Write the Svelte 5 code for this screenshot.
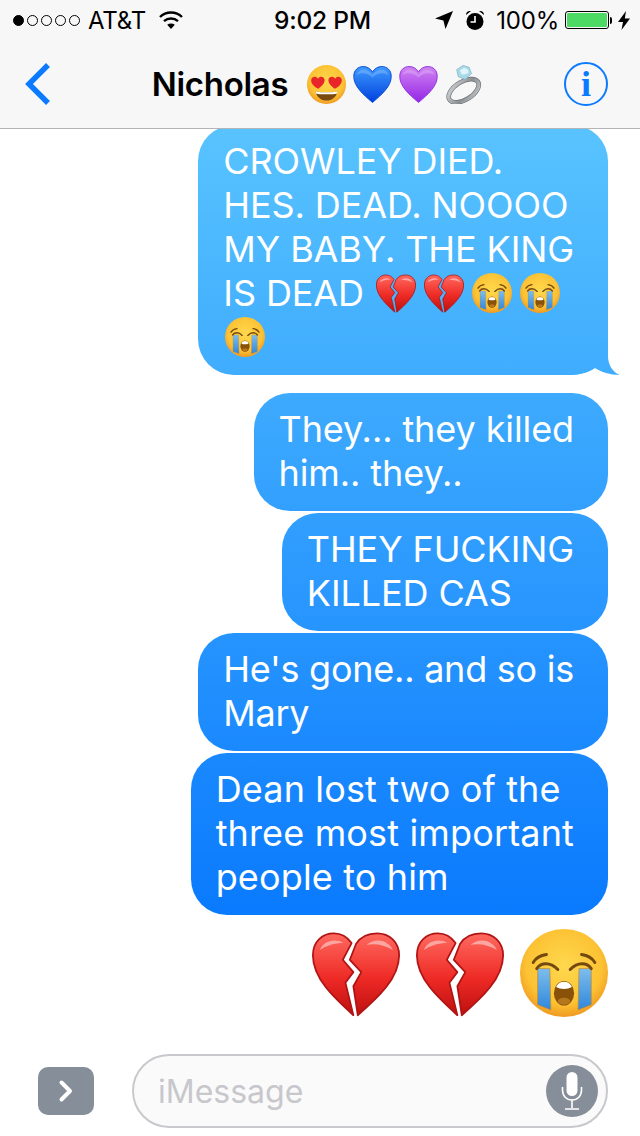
<script>
	const bubbles = [
		{ lines: ['They... they killed', 'him.. they..'], fit: '' },
		{ lines: ['THEY FUCKING', 'KILLED CAS'], fit: '' },
		{ lines: ["He's gone.. and so is", 'Mary'], fit: 'tight' },
		{ lines: ['Dean lost two of the', 'three most important', 'people to him'], fit: 'loose' }
	];
</script>

{#snippet emoji(name, cls)}
	<svg class={cls} viewBox="0 0 100 100" aria-hidden="true"><use href="#{name}" /></svg>
{/snippet}

<svg class="defs" aria-hidden="true">
	<defs>
		<linearGradient id="g-red" x1="0" y1="0" x2="0" y2="1">
			<stop offset="0" stop-color="#ff6a60" />
			<stop offset="0.55" stop-color="#ee2a25" />
			<stop offset="1" stop-color="#bd1010" />
		</linearGradient>
		<linearGradient id="g-blue" x1="0" y1="0" x2="0" y2="1">
			<stop offset="0" stop-color="#3f9bff" />
			<stop offset="1" stop-color="#0040dd" />
		</linearGradient>
		<linearGradient id="g-purple" x1="0" y1="0" x2="0" y2="1">
			<stop offset="0" stop-color="#d184f2" />
			<stop offset="1" stop-color="#9526e6" />
		</linearGradient>
		<radialGradient id="g-face" cx="0.5" cy="0.42" r="0.6">
			<stop offset="0" stop-color="#ffd84e" />
			<stop offset="0.72" stop-color="#fcc233" />
			<stop offset="1" stop-color="#ee9520" />
		</radialGradient>
		<linearGradient id="g-tear" x1="0" y1="0" x2="0" y2="1">
			<stop offset="0" stop-color="#7dbdec" />
			<stop offset="1" stop-color="#2f87dc" />
		</linearGradient>
		<linearGradient id="g-silver" x1="0" y1="0" x2="1" y2="1">
			<stop offset="0" stop-color="#d5d8da" />
			<stop offset="0.55" stop-color="#8b8e91" />
			<stop offset="1" stop-color="#c6c9cb" />
		</linearGradient>
		<clipPath id="face-clip"><circle cx="50" cy="50" r="50" /></clipPath>

		<symbol id="broken" viewBox="0 0 100 100">
			<g transform="translate(0 2)">
				<path d="M47 96 C25 76 1 54 1 28 C1 12 12 3 25 3 C33 3 40 7 45 14 L35 33 L47 47 L38 59 Z" fill="url(#g-red)" stroke="#b01414" stroke-width="2" stroke-linejoin="round" />
				<path d="M52 96 L47 63 L56 47 L43 33 L50 15 C55 7 63 3 74 3 C88 3 99 13 99 28 C99 54 75 76 52 96 Z" fill="url(#g-red)" stroke="#b01414" stroke-width="2" stroke-linejoin="round" />
				<path d="M9 22 C12 12 26 8 36 14 C26 14 16 17 9 22 Z" fill="#fff" opacity="0.45" />
				<path d="M62 16 C72 8 86 10 92 22 C82 16 72 14 62 16 Z" fill="#fff" opacity="0.45" />
			</g>
		</symbol>

		<symbol id="heart-blue" viewBox="0 0 100 100">
			<path d="M50 96 C24 74 2 54 2 29 C2 13 13 4 26 4 C36 4 45 9 50 18 C55 9 64 4 74 4 C87 4 98 13 98 29 C98 54 76 74 50 96 Z" fill="url(#g-blue)" stroke="#0b4cd2" stroke-width="2.5" />
			<path d="M9 26 C12 14 26 9 38 15 C46 19 50 25 50 25 C50 25 54 19 62 15 C74 9 88 14 91 26 C80 18 62 20 50 32 C38 20 20 18 9 26 Z" fill="#fff" opacity="0.2" />
		</symbol>

		<symbol id="heart-purple" viewBox="0 0 100 100">
			<path d="M50 96 C24 74 2 54 2 29 C2 13 13 4 26 4 C36 4 45 9 50 18 C55 9 64 4 74 4 C87 4 98 13 98 29 C98 54 76 74 50 96 Z" fill="url(#g-purple)" stroke="#9030dc" stroke-width="2.5" />
			<path d="M9 26 C12 14 26 9 38 15 C46 19 50 25 50 25 C50 25 54 19 62 15 C74 9 88 14 91 26 C80 18 62 20 50 32 C38 20 20 18 9 26 Z" fill="#fff" opacity="0.2" />
		</symbol>

		<symbol id="crying" viewBox="0 0 100 100">
			<circle cx="50" cy="50" r="50" fill="url(#g-face)" />
			<g clip-path="url(#face-clip)">
				<path d="M20 45 H34 L35 92 L20 86 Z" fill="url(#g-tear)" stroke="#c98a2a" stroke-width="0.8" />
				<path d="M67 45 H81 V86 L66 92 Z" fill="url(#g-tear)" stroke="#c98a2a" stroke-width="0.8" />
			</g>
			<path d="M15 38 C18 33 23 30 30 29" fill="none" stroke="#74490f" stroke-width="3.4" stroke-linecap="round" />
			<path d="M70 29 C77 30 82 33 85 38" fill="none" stroke="#74490f" stroke-width="3.4" stroke-linecap="round" />
			<path d="M19 45 C24 38 34 37 43 46" fill="none" stroke="#74490f" stroke-width="3.4" stroke-linecap="round" />
			<path d="M57 46 C66 37 76 38 81 45" fill="none" stroke="#74490f" stroke-width="3.4" stroke-linecap="round" />
			<ellipse cx="50" cy="73" rx="11.5" ry="14" fill="#8a5208" />
			<path d="M41 66 C44 58 56 58 59 66 C54 69 46 69 41 66 Z" fill="#fff" />
			<ellipse cx="50" cy="82" rx="7" ry="4" fill="#b5771c" />
		</symbol>

		<symbol id="hearteyes" viewBox="0 0 100 100">
			<circle cx="50" cy="50" r="50" fill="url(#g-face)" />
			<path d="M22 67 C36 71 64 71 78 67 C76 82 64 91 50 91 C36 91 24 82 22 67 Z" fill="#7a4b10" />
			<path d="M22 67 C36 71 64 71 78 67 L77 73 C64 76 36 76 23 73 Z" fill="#fff" />
			<path d="M29 61 C18 55 9 47 11 37 C13 29 23 28 28 35 C33 27 44 29 45 38 C46 47 37 55 29 61 Z" fill="#e8262a" />
			<path d="M71 61 C82 55 91 47 89 37 C87 29 77 28 72 35 C67 27 56 29 55 38 C54 47 63 55 71 61 Z" fill="#e8262a" />
		</symbol>

		<symbol id="ring" viewBox="0 0 100 100">
			<ellipse cx="48" cy="66" rx="43" ry="23" transform="rotate(-32 48 66)" fill="none" stroke="#6f7275" stroke-width="12" />
			<ellipse cx="48" cy="66" rx="43" ry="23" transform="rotate(-32 48 66)" fill="none" stroke="url(#g-silver)" stroke-width="8.5" />
			<path d="M30 12 L46 1 L62 6 L68 22 L52 37 L34 30 Z" fill="#a9d9e8" stroke="#6fa6b8" stroke-width="1.5" />
			<path d="M38 14 L49 7 L59 12 L60 21 L44 25 Z" fill="#e0f5fa" />
		</symbol>
	</defs>
</svg>

<div class="screen">
	<header class="top">
		<div class="status">
			<div class="status-left">
				<span class="dots">
					<i class="dot on"></i><i class="dot"></i><i class="dot"></i><i class="dot"></i><i class="dot"></i>
				</span>
				<span class="carrier">AT&amp;T</span>
				<svg class="wifi" viewBox="0 0 24 18" aria-hidden="true">
					<path d="M1 6 C7 0 17 0 23 6" fill="none" stroke="#000" stroke-width="2.4" />
					<path d="M5 10.2 C9 6.6 15 6.6 19 10.2" fill="none" stroke="#000" stroke-width="2.4" />
					<path d="M12 18 L8.2 13.8 C10.3 12.2 13.7 12.2 15.8 13.8 Z" fill="#000" />
				</svg>
			</div>
			<div class="time">9:02 PM</div>
			<div class="status-right">
				<svg class="loc" viewBox="0 0 18 18" aria-hidden="true">
					<path d="M18 0 L10.5 18 L8.4 9.6 L0 7.6 Z" fill="#000" />
				</svg>
				<svg class="alarm" viewBox="0 0 20 20" aria-hidden="true">
					<circle cx="10" cy="11.5" r="8.5" fill="#000" />
					<path d="M1 5 C1 2 3 0.5 6 1 Z M19 5 C19 2 17 0.5 14 1 Z" fill="#000" />
					<path d="M10 6 V12 H5.5" fill="none" stroke="#fff" stroke-width="1.6" />
				</svg>
				<span class="pct">100%</span>
				<span class="battery"><span class="level"></span></span>
				<span class="nub"></span>
				<svg class="bolt" viewBox="0 0 12 19" aria-hidden="true">
					<path d="M8 0 L0 11 H5 L3.5 19 L12 7.5 H6.8 Z" fill="#000" />
				</svg>
			</div>
		</div>
		<nav class="nav">
			<svg class="back" viewBox="0 0 26 44" aria-hidden="true">
				<path d="M23 3 L4 22 L23 41" fill="none" stroke="#0a7aff" stroke-width="5.5" />
			</svg>
			<div class="title">
				<span class="name">Nicholas</span>
				<span class="title-emoji">
					{@render emoji('hearteyes', 'em-title')}
					{@render emoji('heart-blue', 'em-title')}
					{@render emoji('heart-purple', 'em-title')}
					{@render emoji('ring', 'em-title')}
				</span>
			</div>
			<div class="info"><span>i</span></div>
		</nav>
	</header>

	<main class="thread">
		<div class="bubble first">
			CROWLEY DIED.<br />
			HES. DEAD. NOOOO<br />
			MY BABY. THE KING<br />
			IS DEAD
			<span class="inline-emoji">
				{@render emoji('broken', 'em-text')}
				{@render emoji('broken', 'em-text')}
				{@render emoji('crying', 'em-text')}
				{@render emoji('crying', 'em-text')}
			</span><br />
			<span class="inline-emoji last">{@render emoji('crying', 'em-text')}</span>
			<span class="tail"></span>
		</div>
		<div class="stack">
			{#each bubbles as b}
				<div class="bubble {b.fit}">
					{#each b.lines as line, i}{#if i > 0}<br />{/if}{line}{/each}
				</div>
			{/each}
		</div>
		<div class="big-row">
			{@render emoji('broken', 'em-big')}
			{@render emoji('broken', 'em-big')}
			{@render emoji('crying', 'em-big')}
		</div>
	</main>

	<footer class="composer">
		<div class="apps">
			<svg viewBox="0 0 16 24" aria-hidden="true">
				<path d="M3.5 3.5 L12 12 L3.5 20.5" fill="none" stroke="#fff" stroke-width="4" stroke-linecap="round" stroke-linejoin="round" />
			</svg>
		</div>
		<div class="input">
			<span class="placeholder">iMessage</span>
			<div class="mic">
				<svg viewBox="0 0 24 40" aria-hidden="true">
					<rect x="6.5" y="1" width="11" height="24" rx="5.5" fill="#fff" />
					<path d="M2.5 16 V19 C2.5 25 6.5 29 12 29 C17.5 29 21.5 25 21.5 19 V16 M12 29 V37 M5 38 H19" fill="none" stroke="#fff" stroke-width="1.6" />
				</svg>
			</div>
		</div>
	</footer>
</div>

<style>
	:global(body) {
		background: #fff;
		overflow: hidden;
	}
	.defs {
		position: absolute;
		width: 0;
		height: 0;
	}
	.screen {
		width: 640px;
		height: 1136px;
		display: flex;
		flex-direction: column;
		overflow: hidden;
		font-family: Inter, 'Liberation Sans', sans-serif;
		color: #000;
	}
	.top {
		position: relative;
		z-index: 2;
		height: 128px;
		flex: none;
		background: #f7f7f8;
		border-bottom: 1px solid #b4b4b6;
	}
	.status {
		height: 40px;
		display: grid;
		grid-template-columns: 1fr auto 1fr;
		align-items: center;
		padding: 0 10px 0 13px;
		font-size: 24px;
		letter-spacing: -0.2px;
	}
	.status-left {
		display: flex;
		align-items: center;
	}
	.dots {
		display: flex;
		gap: 3px;
	}
	.dot {
		width: 11px;
		height: 11px;
		box-sizing: border-box;
		border: 1.2px solid #000;
		border-radius: 50%;
	}
	.dot.on {
		background: #000;
	}
	.carrier {
		margin-left: 8px;
	}
	.wifi {
		width: 24px;
		height: 18px;
		margin-left: 13px;
	}
	.time {
		font-weight: 500;
		font-size: 24.5px;
		margin-left: 2px;
	}
	.status-right {
		display: flex;
		align-items: center;
		justify-content: flex-end;
	}
	.loc {
		width: 18px;
		height: 18px;
	}
	.alarm {
		width: 20px;
		height: 20px;
		margin-left: 12px;
	}
	.pct {
		margin-left: 11px;
	}
	.battery {
		width: 44px;
		height: 18px;
		box-sizing: border-box;
		margin-left: 6px;
		border: 1px solid #000;
		border-radius: 3px;
		padding: 1px;
		display: flex;
	}
	.level {
		flex: 1;
		background: #4cd964;
		border-radius: 1.5px;
	}
	.nub {
		width: 2px;
		height: 7px;
		margin-left: 1px;
		background: #000;
		border-radius: 0 2px 2px 0;
	}
	.bolt {
		width: 12px;
		height: 19px;
		margin-left: 6px;
	}
	.nav {
		height: 88px;
		display: grid;
		grid-template-columns: 1fr auto 1fr;
		align-items: center;
		padding: 0 32px 4px 25px;
	}
	.back {
		width: 26px;
		height: 44px;
	}
	.title {
		display: flex;
		align-items: center;
		margin-left: 3px;
	}
	.name {
		font-size: 33px;
		font-weight: 600;
		letter-spacing: -0.3px;
	}
	.title-emoji {
		display: flex;
		gap: 7px;
		margin-left: 19px;
	}
	.em-title {
		width: 39px;
		height: 39px;
	}
	.info {
		justify-self: end;
		width: 44px;
		height: 44px;
		box-sizing: border-box;
		border: 2px solid #0a7aff;
		border-radius: 50%;
		display: flex;
		align-items: center;
		justify-content: center;
		color: #0a7aff;
		font-family: 'Liberation Serif', serif;
		font-weight: 700;
		font-size: 36px;
		line-height: 1;
	}
	.thread {
		flex: 1;
		display: flex;
		flex-direction: column;
		align-items: flex-end;
		padding-right: 32px;
		margin-top: -4px;
	}
	.bubble {
		position: relative;
		padding: 14px 34px 16px 25px;
		border-radius: 36px;
		white-space: nowrap;
		color: #fff;
		font-size: 36px;
		letter-spacing: -0.1px;
		line-height: 44px;
		background: linear-gradient(#58c3fe 128px, #0a7afe 915px) fixed;
	}
	.bubble.tight {
		letter-spacing: -0.25px;
	}
	.bubble.loose {
		letter-spacing: 0.15px;
	}
	.first {
		margin-bottom: 18px;
	}
	.tail {
		position: absolute;
		right: -12px;
		bottom: 0;
		width: 50px;
		height: 35px;
		background: linear-gradient(#58c3fe 128px, #0a7afe 915px) fixed;
		clip-path: path('M38 0 V16 C38 24 42 32 50 35 C40 35 31 32 25 28 C20 32 10 35 0 35 V0 Z');
	}
	.stack {
		display: flex;
		flex-direction: column;
		align-items: flex-end;
		gap: 2px;
	}
	.inline-emoji {
		display: inline-flex;
		gap: 8px;
		margin-left: 2px;
		vertical-align: -7px;
	}
	.em-text {
		width: 40px;
		height: 40px;
		display: block;
	}
	.big-row {
		display: flex;
		gap: 16px;
		margin-top: 14px;
	}
	.em-big {
		width: 88px;
		height: 88px;
		display: block;
	}
	.composer {
		flex: none;
		height: 82px;
		box-sizing: border-box;
		padding: 0 32px 8px 38px;
		display: flex;
		align-items: center;
		gap: 38px;
	}
	.apps {
		width: 56px;
		height: 48px;
		flex: none;
		border-radius: 10px;
		background: #868e9a;
		display: flex;
		align-items: center;
		justify-content: center;
	}
	.apps svg {
		width: 16px;
		height: 24px;
	}
	.input {
		flex: 1;
		height: 74px;
		box-sizing: border-box;
		border: 2px solid #c8c8cd;
		border-radius: 37px;
		background: #fafafa;
		display: flex;
		align-items: center;
		justify-content: space-between;
		padding: 0 8px 0 24px;
	}
	.placeholder {
		color: #c7c7cc;
		font-size: 32px;
	}
	.mic {
		width: 52px;
		height: 52px;
		border-radius: 50%;
		background: #868e99;
		display: flex;
		align-items: center;
		justify-content: center;
	}
	.mic svg {
		width: 24px;
		height: 40px;
	}
</style>
